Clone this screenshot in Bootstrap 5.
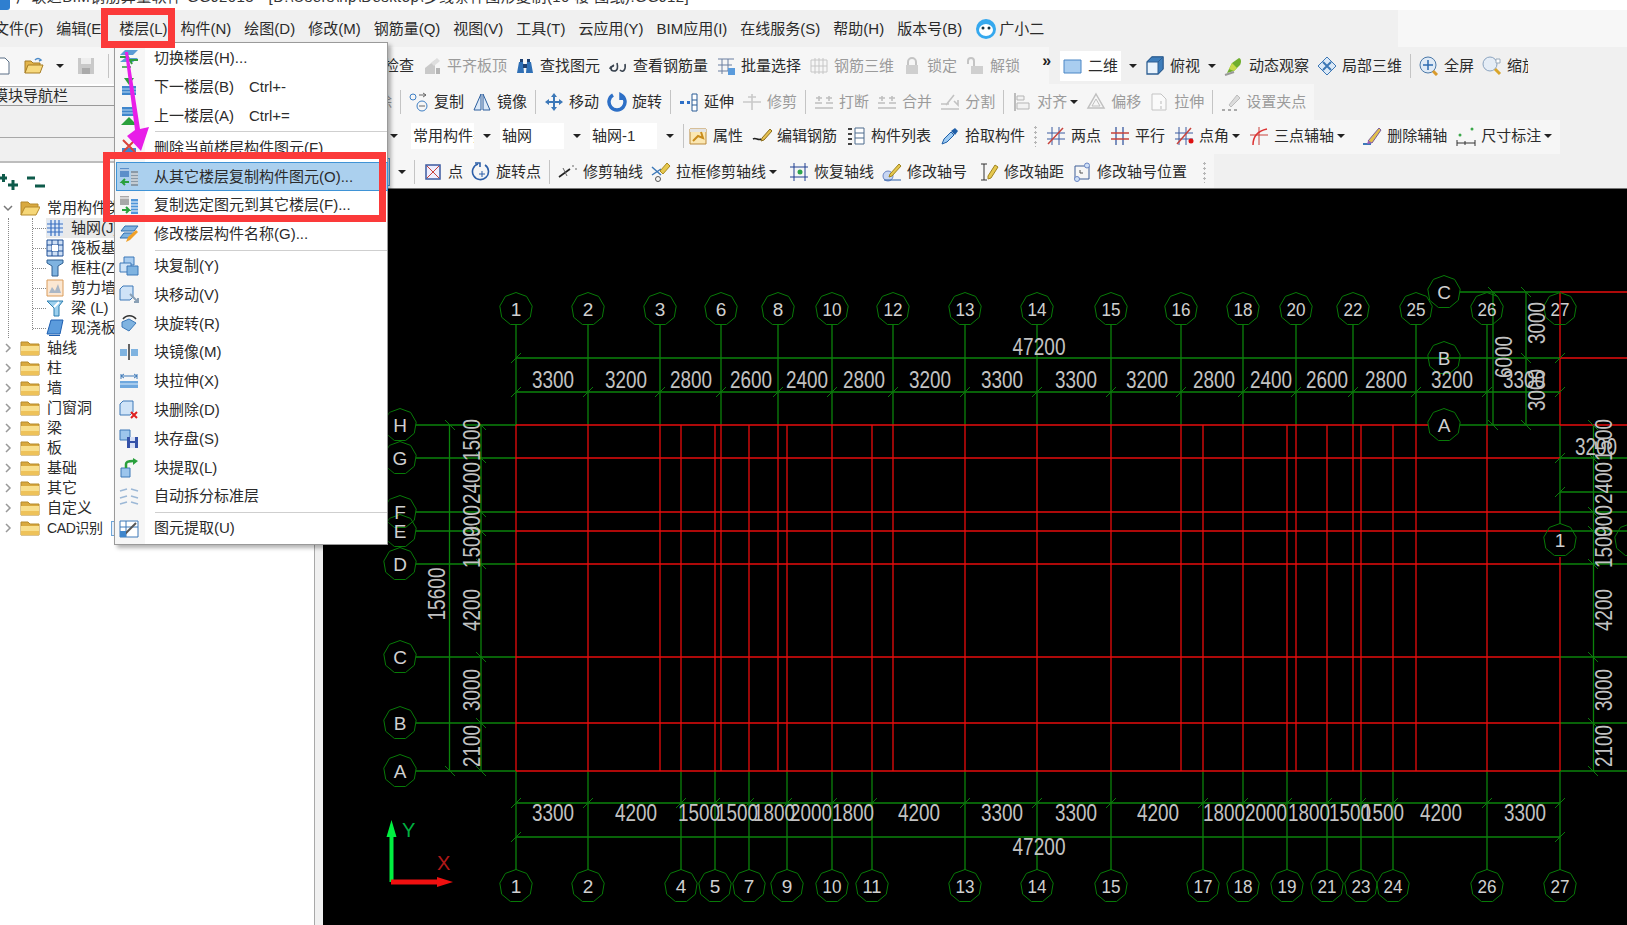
<!DOCTYPE html>
<html lang="zh-CN">
<head>
<meta charset="utf-8">
<title>广联达BIM钢筋算量软件 GGJ2013</title>
<link href="https://cdn.jsdelivr.net/npm/bootstrap@5.3.0/dist/css/bootstrap.min.css" rel="stylesheet">
<style>
html,body{height:100%;overflow:hidden}
body{font-family:"Liberation Sans","Noto Sans CJK SC",sans-serif;font-size:15px;color:#2b2b2b;background:#f0f0f0;line-height:20px}
.shell{width:1627px;height:925px;overflow:hidden}
.title-strip{height:10px;background:#fff;overflow:hidden;white-space:nowrap;padding-left:16px}
.title-strip span{margin-bottom:3px;color:#333;letter-spacing:.4px}
.title-ico{width:10px;height:10px;background:#2f7fd0;margin-left:-16px;margin-right:6px;border-radius:0 0 3px 0;flex:none}
.menu-strip{height:37px;background:linear-gradient(90deg,#f0f0f0 1398px,#f7f7f7 1398px);white-space:nowrap;padding-left:0}
.menu-strip>span{margin-left:13px}
.menu-strip>span:first-child{margin-left:-6px}
.menu-strip svg{width:22px;height:22px;margin-right:2px}
.tb{white-space:nowrap;gap:8px;overflow:hidden;background:#f0f0f0}
.tb-one{height:37px}
.tb-two{height:36px}
.tb-three,.tb-four{height:34px}
.tb-three{gap:9px}
.tb-three .tb-lit{padding-bottom:2px}
.tb-four .tb-lit{padding-top:2px}
.tb-lit{background:#f6f6f6;gap:inherit;height:100%}
.lit-end{padding-right:8px}
.tool{gap:5px;flex:none}
.tool svg{width:20px;height:20px;flex:none}
.tool .car{margin-left:-2px}
.pull-in{margin-left:-5px}
.off{color:#9b9b9b}
.vs{width:1px;height:24px;background:#c4c4c4;flex:none}
.car{width:0;height:0;border:4px solid transparent;border-top:4px solid #222;border-bottom:0;flex:none}
.grip{width:3px;height:22px;flex:none;background:radial-gradient(circle,#b5b5b5 1.2px,transparent 1.4px) 0 0/3px 5px}
.lead-one{width:384px;margin-left:-8px;gap:12px;flex:none}
.lead-one svg{width:20px;height:20px}
.lead-two{width:69px;flex:none;justify-content:flex-end;overflow:hidden}
.lead-three{width:75px;flex:none;justify-content:flex-end;gap:0}
.lead-four{width:67px;flex:none;justify-content:flex-end}
.blue-stub{width:10px;height:28px;border:1px solid #4ea3dc;border-left:0;background:#dbeafa;flex:none}
.combo-box{background:#fff;overflow:hidden;height:26px;line-height:26px;padding-left:2px;flex:none}
.w-a{width:63px}.w-b{width:64px}.w-c{width:67px}
.twod{background:#fff;height:30px;padding:0 3px;margin-left:3px}
.chev2{font-size:16px;font-weight:700;line-height:14px;margin:-10px -2px 0 14px;color:#222}
.clip-txt{width:21px;overflow:hidden;flex:none}
.side{width:315px;flex:none;background:#fff;border-right:1px solid #a8a8a8}
.side-head{height:20px;margin-top:2px;background:#f0f0f0;border-top:1px solid #aaa;border-bottom:1px solid #999;text-indent:-7px;line-height:18px;overflow:hidden;white-space:nowrap}
.side-band{height:32px;background:#f0f0f0;border-bottom:1px solid #a8a8a8}
.side-band.lo{height:25px;border-bottom:2px solid #bdbdbd}
.side-tools{height:35px;background:#fff;padding:11px 0 0 0;gap:8px}
.side-tools svg{width:19px;height:17px}
.twig{height:20px;padding-left:3px;white-space:nowrap;overflow:hidden}
.twig .arr{width:10px;height:12px;margin-right:7px;flex:none}
.twig .fld{width:20px;height:18px;margin-right:7px;flex:none}
.cadtag{font-size:14px;letter-spacing:-.4px}
.kidbox{margin-left:8px;border-left:1px dotted #888;height:120px}
.kidin{margin-left:23px;border-left:1px dotted #888;height:112px}
.kid{height:20px;white-space:nowrap;overflow:hidden}
.kid .dot{width:13px;border-top:1px dotted #888;flex:none}
.kid svg{width:18px;height:18px;margin:0 7px 0 0;flex:none}
.kid.on{background:linear-gradient(90deg,transparent 13px,#e9e9e9 13px)}
.mini{width:10px;height:15px;border:1px solid #6fa5d8;background:#e8f1fb;margin-left:8px;flex:none}
.gutter{width:8px;flex:none;background:#f0f0f0}
.work{width:1304px;flex:none;min-width:0}
.sheet{height:737px;background:#000;overflow:hidden;border-top:1px solid #777}
.sheet svg{display:block}
.g{stroke:#0b820b;stroke-width:1.3;fill:none}
.r{stroke:#e80c0c;stroke-width:1.3;fill:none}
.tk{stroke:#0a7a0a;stroke-width:1;fill:none}
.bb{stroke:#087a08;stroke-width:1;fill:none}
.num text{font-size:19px;fill:#d0d0d0;text-anchor:middle;font-family:"Liberation Sans",sans-serif}
.dm text{font-size:24px;fill:#c2c2c2;text-anchor:middle;font-family:"Liberation Sans",sans-serif}
.ax-y{font-size:20px;fill:#00b040;font-family:"Liberation Sans",sans-serif;font-weight:400}
.ax-x{font-size:20px;fill:#b01818;font-family:"Liberation Sans",sans-serif}
.dropdown-menu.floormenu{position:absolute;left:114px;top:42px;width:274px;height:503px;padding:1px 0;margin:0;min-width:0;border:1px solid #9a9a9a;border-radius:0;background:linear-gradient(90deg,#f6f6f6 30px,#fff 30px);box-shadow:3px 3px 4px rgba(0,0,0,.3);font-size:15px;z-index:5}
.floormenu .dropdown-item{height:28.8px;padding:0 0 0 4px;color:#2b2b2b;font-size:15px;line-height:28px;white-space:nowrap;gap:15px}
.floormenu .dropdown-item svg{width:20px;height:20px;flex:none}
.floormenu .dropdown-item.picked{background:#abd0ee;outline:1px solid #3f93d6;outline-offset:-1px;margin-left:1px;padding-left:3px}
.floormenu .dropdown-divider{margin:1px 0 1px 40px;border-top:1px solid #cfcfcf}
.redbox{position:absolute;border:7px solid #fb3a3a;z-index:6}
.rb-a{left:101px;top:8px;width:74px;height:40px}
.rb-b{left:103px;top:152px;width:283px;height:70px}
.anno{position:absolute;left:0;top:0;z-index:7;pointer-events:none}
</style>
</head>
<body>
<svg class="d-none" xmlns="http://www.w3.org/2000/svg">
<!-- toolbar icons -->
<symbol id="doc" viewBox="0 0 20 20"><path d="M3 2h10l4 4v12H3z" fill="#fff" stroke="#5a6f86"/></symbol>
<symbol id="open" viewBox="0 0 20 20"><path d="M1 17V5h6l2 2h7v3" fill="#e3b54c" stroke="#a67c24"/><path d="M1 17l3-8h15l-3 8z" fill="#f7d97e" stroke="#a67c24"/><path d="M11 4c2-2 4-2 6 0l-2 1" fill="none" stroke="#4b8ac8" stroke-width="1.5"/></symbol>
<symbol id="save" viewBox="0 0 20 20"><path d="M2 2h16v16H2z" fill="#c9c9c9"/><path d="M5 2h10v6H5z" fill="#eee"/><path d="M6 12h8v6H6z" fill="#aaa"/></symbol>
<symbol id="level" viewBox="0 0 20 20"><path d="M3 18v-6l10-8v14z" fill="#c9c9c9"/><path d="M9 7l6-5 3 3-6 5z" fill="#dedede"/><path d="M14 12h4v6h-4z" fill="#b5b5b5"/></symbol>
<symbol id="bino" viewBox="0 0 20 20"><path d="M2 17l2-11h4l1 11zM18 17l-2-11h-4l-1 11z" fill="#2f6fb5"/><path d="M5 3h3v3H5zM12 3h3v3h-3zM8 8h4v4H8z" fill="#1d3f70"/></symbol>
<symbol id="hook" viewBox="0 0 20 20"><path d="M2 13c0-3 2-3 4-3M6 9c-4 2-4 6 0 6s4-4 3-8M12 14c3 3 6 0 5-6" fill="none" stroke="#3a4450" stroke-width="1.6"/></symbol>
<symbol id="batch" viewBox="0 0 20 20"><path d="M2 3h16M2 9h14M2 15h10M6 3v15M12 3v12" stroke="#6b7fa0" fill="none"/><path d="M12 12h7v7h-7z" fill="#5a9bdc"/></symbol>
<symbol id="grid3" viewBox="0 0 20 20"><path d="M2 4h16v12H2zM6 2v16M10 2v16M14 2v16M2 10h16" fill="none" stroke="#c6c6c6"/></symbol>
<symbol id="lock" viewBox="0 0 20 20"><path d="M4 9h12v9H4z" fill="#cfcfcf"/><path d="M6 9V6a4 4 0 0 1 8 0v3" fill="none" stroke="#c4c4c4" stroke-width="2"/></symbol>
<symbol id="unlock" viewBox="0 0 20 20"><path d="M6 10h12v8H6z" fill="#cfcfcf"/><path d="M3 8V5a3 3 0 0 1 6 0v5" fill="none" stroke="#c4c4c4" stroke-width="2"/></symbol>
<symbol id="sq" viewBox="0 0 20 20"><path d="M1 4h17v13H1z" fill="#a9cdf0" stroke="#4a86c5"/></symbol>
<symbol id="cube" viewBox="0 0 20 20"><path d="M2 6l5-5h11v12l-5 5H2z" fill="#e9f3fc" stroke="#2e5f92" stroke-width="1.3"/><path d="M2 6h11l5-5H7zM13 6h0v12l5-5V1z" fill="#3d7dbb" stroke="#2e5f92"/></symbol>
<symbol id="orbit" viewBox="0 0 20 20"><path d="M3 17L8 7l7-5c3 1 2 5 1 7l-6 6z" fill="#6fae2e"/><path d="M8 7l5 5-3 3-5-2z" fill="#c6d94a"/><path d="M1 19l9-3" stroke="#999" stroke-width="2"/></symbol>
<symbol id="local" viewBox="0 0 20 20"><path d="M10 1l9 9-9 9-9-9z" fill="#dbe9f7" stroke="#3c77b5"/><path d="M6 6l8 8M14 6l-8 8" stroke="#3c77b5" stroke-width="2"/></symbol>
<symbol id="zall" viewBox="0 0 20 20"><circle cx="9" cy="9" r="8" fill="#dfeaf6" stroke="#4a78a8"/><path d="M9 4v10M4 9h10" stroke="#2e6bb0" stroke-width="1.5"/><path d="M14 15l4 4" stroke="#d99a2b" stroke-width="3"/></symbol>
<symbol id="zwin" viewBox="0 0 20 20"><circle cx="8" cy="8" r="7" fill="#e5edf6" stroke="#8aa3bf"/><path d="M13 13l5 5" stroke="#d9a52b" stroke-width="3"/><path d="M14 3h4v4h-4z" fill="#fff" stroke="#9ab"/></symbol>
<symbol id="cp" viewBox="0 0 20 20"><circle cx="4" cy="5" r="3" fill="none" stroke="#3f7fc4"/><circle cx="13" cy="14" r="5" fill="none" stroke="#3f7fc4"/><path d="M10 3l7 0M14 1l3 2-3 2M10 14l6 0" stroke="#666" fill="none"/></symbol>
<symbol id="mir" viewBox="0 0 20 20"><path d="M9 2L2 18h7zM11 2l7 16h-7z" fill="#dce9f7" stroke="#2c5f9e"/></symbol>
<symbol id="mv" viewBox="0 0 20 20"><path d="M10 1l3 4h-2v4h4V7l4 3-4 3v-2h-4v4h2l-3 4-3-4h2v-4H5v2l-4-3 4-3v2h4V5H7z" fill="#3c78b8"/></symbol>
<symbol id="rot" viewBox="0 0 20 20"><path d="M6 3a8 8 0 1 0 8 0v5" fill="none" stroke="#2d6fc6" stroke-width="3.5"/></symbol>
<symbol id="ext" viewBox="0 0 20 20"><path d="M1 9h4v3H1zM8 9h3v3H8z" fill="#2d6fc6"/><path d="M13 2h5v17h-5zM13 8h5M13 13h5" fill="#fff" stroke="#2a5d96"/></symbol>
<symbol id="trm" viewBox="0 0 20 20"><path d="M1 10h18M10 2v16M6 5h8" stroke="#c9c9c9" stroke-width="1.6" fill="none"/></symbol>
<symbol id="brk" viewBox="0 0 20 20"><path d="M1 11h7M12 11h7M1 16h18M5 4v5M15 4v5M2 6h6M12 6h6" stroke="#bfbfbf" stroke-width="1.6" fill="none"/></symbol>
<symbol id="spl" viewBox="0 0 20 20"><path d="M1 17h18M1 12h8M14 3L6 13M14 9l4 4v-5" stroke="#c2c2c2" stroke-width="1.6" fill="none"/></symbol>
<symbol id="alg" viewBox="0 0 20 20"><path d="M3 1v18" stroke="#a8a8a8" stroke-width="1.5"/><path d="M5 4h7v4H5zM5 11h12v6H5z" fill="#f2f2f2" stroke="#b5b5b5"/></symbol>
<symbol id="ofs" viewBox="0 0 20 20"><path d="M10 2l8 14H2z" fill="none" stroke="#c0c0c0" stroke-width="1.5"/><path d="M10 7l4 7H6z" fill="none" stroke="#c0c0c0"/></symbol>
<symbol id="str" viewBox="0 0 20 20"><path d="M3 2h9l5 5v11H3z" fill="#fafafa" stroke="#c4c4c4"/><path d="M12 9v3M12 14v3" stroke="#bbb"/></symbol>
<symbol id="gripi" viewBox="0 0 20 20"><path d="M8 13L16 3l3 3-9 9z" fill="#dcdcdc" stroke="#bcbcbc"/><path d="M1 18h3M7 18h3M13 18h3" stroke="#aaa" stroke-width="2"/></symbol>
<symbol id="prop" viewBox="0 0 20 20"><path d="M2 3h16v15H2z" fill="#fbe7b2" stroke="#b9893a"/><path d="M2 3h16v3H2z" fill="#e3e3e3"/><path d="M5 15l5-5 5 2-2-6" stroke="#c98c1c" stroke-width="2" fill="none"/></symbol>
<symbol id="edr" viewBox="0 0 20 20"><path d="M1 13c3-2 5 2 8 0" stroke="#222" stroke-width="1.6" fill="none"/><path d="M10 12L18 3l2 2-8 9-3 1z" fill="#e6c04f" stroke="#8a6d1d"/></symbol>
<symbol id="lst" viewBox="0 0 20 20"><path d="M9 2h9v16H9zM9 7h9M9 12h9" fill="#fff" stroke="#4c6a8c"/><path d="M2 3h4M2 8h4M2 13h4M2 18h4" stroke="#444" stroke-width="2"/></symbol>
<symbol id="pick" viewBox="0 0 20 20"><path d="M2 18l2-5 7-7 3 3-7 7z" fill="#9ccaf2" stroke="#1f5fa8"/><path d="M11 5l4-3 3 3-3 4z" fill="#1f5fa8"/></symbol>
<symbol id="twop" viewBox="0 0 20 20"><path d="M6 1v18M13 1v18M1 7h18M1 13h18" stroke="#3a5aa0" fill="none"/><path d="M2 18L17 2" stroke="#c8433c" stroke-width="1.5"/></symbol>
<symbol id="para" viewBox="0 0 20 20"><path d="M6 1v18M13 1v18" stroke="#3a5aa0" stroke-width="1.3" fill="none"/><path d="M1 7h18M1 13h18" stroke="#c8433c" stroke-width="1.3"/></symbol>
<symbol id="pang" viewBox="0 0 20 20"><path d="M5 1v18M12 1v18M1 7h18M1 13h18" stroke="#3a5aa0" fill="none"/><path d="M3 18L17 2" stroke="#c8433c" stroke-width="1.5"/><circle cx="17" cy="15" r="2.5" fill="#d11"/></symbol>
<symbol id="thrp" viewBox="0 0 20 20"><path d="M10 1v18M1 9h18" stroke="#c8433c" fill="none"/><path d="M4 19c0-8 4-14 14-16" stroke="#d33" stroke-width="1.5" fill="none"/></symbol>
<symbol id="dela" viewBox="0 0 20 20"><path d="M1 18h8" stroke="#3c78b8" stroke-width="2"/><path d="M6 15L17 2l2 2-9 13z" fill="#e2c04b" stroke="#7a5c9a"/><path d="M6 15l4 2-5 1z" fill="#a55fb5"/></symbol>
<symbol id="dimn" viewBox="0 0 20 20"><path d="M1 17h18M1 14v6M19 14v6M9 15v4" stroke="#333" fill="none"/><circle cx="4" cy="9" r="1.5" fill="#3ba84a"/><circle cx="16" cy="3" r="1.5" fill="#3ba84a"/></symbol>
<symbol id="ptx" viewBox="0 0 20 20"><path d="M3 3h14v14H3z" fill="#eef" stroke="#3d5aa0" stroke-width="1.5"/><path d="M4 4l12 12M16 4L4 16" stroke="#c8433c"/></symbol>
<symbol id="rotp" viewBox="0 0 20 20"><path d="M7 2a8 8 0 1 0 7 1" fill="none" stroke="#2d5fa8" stroke-width="1.6"/><path d="M4 1h5v4" fill="none" stroke="#2d5fa8" stroke-width="1.6"/><path d="M11 9v6M8 12h6" stroke="#2d5fa8"/></symbol>
<symbol id="trma" viewBox="0 0 20 20"><path d="M1 15L12 7" stroke="#222" stroke-width="1.6"/><path d="M5 6l4 8M14 4l2 0M17 7l2 0" stroke="#666"/></symbol>
<symbol id="boxt" viewBox="0 0 20 20"><path d="M1 5l9 8M1 13l9-6" stroke="#3c78b8" stroke-width="1.5"/><path d="M9 9l7-8 3 3-7 8z" fill="#e6c84f" stroke="#aa8a20"/><circle cx="7" cy="17" r="2.5" fill="none" stroke="#555"/></symbol>
<symbol id="rest" viewBox="0 0 20 20"><path d="M5 1v18M16 1v18M1 5h18M1 15h18" stroke="#1f3f90" fill="none"/><circle cx="11" cy="10" r="2.5" fill="#2ca44c"/></symbol>
<symbol id="edno" viewBox="0 0 20 20"><circle cx="6" cy="14" r="5" fill="#c8d6f2" stroke="#6b86c4"/><path d="M8 12L17 2l2 2-9 10-3 1z" fill="#e6c84f" stroke="#a0841f"/><path d="M2 18h17" stroke="#2c5fa8"/></symbol>
<symbol id="eddi" viewBox="0 0 20 20"><path d="M2 2h6M5 2v16M2 18h6" stroke="#333" fill="none"/><path d="M9 14l7-11 3 2-7 11-3 1z" fill="#e6c84f" stroke="#a0841f"/></symbol>
<symbol id="edps" viewBox="0 0 20 20"><path d="M3 4h14v13H3z" fill="none" stroke="#3f5f96"/><circle cx="15" cy="3.500" r="2.500" fill="#cfe0f7" stroke="#6b86c4"/><circle cx="5" cy="17" r="2.500" fill="#cfe0f7" stroke="#6b86c4"/><path d="M8 8v3h3" stroke="#555" fill="none"/></symbol>
<!-- menu icons -->
<symbol id="m1" viewBox="0 0 20 20"><path d="M1 7l5-5h13l-5 5z" fill="#5b9bd5"/><path d="M1 14l5-4h13l-5 4z" fill="#5b9bd5"/><path d="M1 9h8l-2-3M19 12h-8l2 4" stroke="#2c9c3c" stroke-width="2" fill="none"/><path d="M3 19h9" stroke="#2c9c3c" stroke-width="1.500"/></symbol>
<symbol id="m2" viewBox="0 0 20 20"><path d="M3 9h14v9H3z" fill="#3f86cc"/><path d="M3 12h14M3 15h14" stroke="#bcd8f2"/><path d="M5 1h10l-5 7z" fill="#2aa03c"/></symbol>
<symbol id="m3" viewBox="0 0 20 20"><path d="M3 1h14v9H3z" fill="#3f86cc"/><path d="M3 4h14M3 7h14" stroke="#bcd8f2"/><path d="M10 11l8 8H2z" fill="#2aa03c"/></symbol>
<symbol id="m4" viewBox="0 0 20 20"><path d="M3 10h14v9H3z" fill="#3f86cc"/><path d="M4 2l12 12M16 2L4 14" stroke="#d9433b" stroke-width="2"/></symbol>
<symbol id="m5" viewBox="0 0 20 20"><path d="M1 1h9v9H1z" fill="#5b8fc9"/><path d="M1 3h9" stroke="#fff"/><path d="M12 4h7v15h-7z" fill="#8a9aa8"/><path d="M12 7h7M12 10h7M12 13h7M12 16h7" stroke="#fff"/><path d="M10 15H3l3-3M3 15l3 3" stroke="#2aa03c" stroke-width="2" fill="none"/></symbol>
<symbol id="m6" viewBox="0 0 20 20"><path d="M1 1h9v9H1z" fill="#a8a8a8"/><path d="M1 3h9" stroke="#fff"/><path d="M12 4h7v15h-7z" fill="#4f95d8"/><path d="M12 7h7M12 10h7M12 13h7M12 16h7" stroke="#fff"/><path d="M3 15h7l-3-3M10 15l-3 3" stroke="#2aa03c" stroke-width="2" fill="none"/></symbol>
<symbol id="m7" viewBox="0 0 20 20"><path d="M2 7l4-5h13l-4 5zM1 14l4-5h10l-4 5z" fill="#7fb3e0" stroke="#2e6fb0"/><path d="M7 18l2-5 8-7 2 2-8 8z" fill="#f0a028"/></symbol>
<symbol id="m8" viewBox="0 0 20 20"><path d="M5 1h10v8H5z" fill="#a9cdf0" stroke="#3c78b8"/><path d="M1 7h11v9H1z" fill="#cfe3f7" stroke="#3c78b8"/><path d="M8 10h11v9H8z" fill="#7fb3e0" stroke="#3c78b8"/></symbol>
<symbol id="m9" viewBox="0 0 20 20"><path d="M1 4l3-3h10v11l-3 3H1z" fill="#cfe3f7" stroke="#3c78b8"/><path d="M11 9l8 8M19 13v4h-4" stroke="#8aa0b5" stroke-width="2" fill="none"/></symbol>
<symbol id="m10" viewBox="0 0 20 20"><path d="M3 8l7-3 7 4-7 8-7-4z" fill="#7fb3e0" stroke="#3c78b8"/><path d="M4 5a8 8 0 0 1 13 0" stroke="#333" stroke-width="1.500" fill="none"/></symbol>
<symbol id="m11" viewBox="0 0 20 20"><path d="M10 2v16" stroke="#333" stroke-width="1.500"/><path d="M1 7h7v7H1zM12 7h7v7h-7z" fill="#7fb3e0"/></symbol>
<symbol id="m12" viewBox="0 0 20 20"><path d="M2 3v5M18 3v5M2 5h16M5 3L2 5l3 2M15 3l3 2-3 2" stroke="#3c78b8" fill="none"/><path d="M1 10h18v7H1z" fill="#6fa8de"/><path d="M1 13h18" stroke="#dcecfb"/></symbol>
<symbol id="m13" viewBox="0 0 20 20"><path d="M1 4l3-3h10v11l-3 3H1z" fill="#cfe3f7" stroke="#3c78b8"/><path d="M12 12l6 6M18 12l-6 6" stroke="#e02020" stroke-width="2"/></symbol>
<symbol id="m14" viewBox="0 0 20 20"><path d="M1 1h10v10H1z" fill="#9cc5ec" stroke="#3c78b8"/><path d="M8 8h11v11H8z" fill="#3552a8"/><path d="M11 8h5v4h-5zM11 14h5v5h-5z" fill="#d7e0f5"/></symbol>
<symbol id="m15" viewBox="0 0 20 20"><path d="M2 10h9v9H2z" fill="#9cc5ec" stroke="#3c78b8"/><path d="M7 10V6c0-3 4-3 7-3" stroke="#2aa03c" stroke-width="2.500" fill="none"/><path d="M14 0l5 3-5 4z" fill="#2aa03c"/></symbol>
<symbol id="m16" viewBox="0 0 20 20"><path d="M1 5l7-2M1 12l7-2M1 18l7-2M12 3l7 2M12 10l7 2M12 16l7 2" stroke="#9cb8d6" stroke-width="1.500"/></symbol>
<symbol id="m17" viewBox="0 0 20 20"><path d="M1 3h18v16H1z" fill="#fff" stroke="#3c78b8"/><path d="M1 9h18M7 3v16" stroke="#3c78b8"/><path d="M6 16L17 5" stroke="#555" stroke-width="2"/><path d="M1 13h6v6H1z" fill="#3f86cc"/></symbol>
<symbol id="xm" viewBox="0 0 22 22"><circle cx="11" cy="11" r="10" fill="#35a8ee"/><ellipse cx="11" cy="12" rx="7" ry="6" fill="#fff"/><circle cx="8" cy="10" r="1.500" fill="#134"/><circle cx="14" cy="10" r="1.500" fill="#134"/></symbol>
<!-- tree icons -->
<symbol id="down" viewBox="0 0 10 12"><path d="M1 4l4 4 4-4" fill="none" stroke="#777" stroke-width="1.500"/></symbol>
<symbol id="right" viewBox="0 0 10 12"><path d="M3 2l4 4-4 4" fill="none" stroke="#999" stroke-width="1.500"/></symbol>
<symbol id="fold" viewBox="0 0 20 18"><path d="M1 16V3h7l2 2h9v11z" fill="#d9a93f" stroke="#b58a2c"/><path d="M1 7h18v9H1z" fill="#f8df8e"/><path d="M1 12h18v4H1z" fill="#eec25a"/></symbol>
<symbol id="fopen" viewBox="0 0 20 18"><path d="M1 16V3h7l2 2h8v4" fill="#d9a93f" stroke="#b58a2c"/><path d="M1 16l4-8h15l-4 8z" fill="#f6d778" stroke="#b58a2c"/></symbol>
<symbol id="t1" viewBox="0 0 18 18"><path d="M1 1h16v16H1z" fill="#dce8f7"/><path d="M1 5h16M1 9h16M1 13h16M5 1v16M9 1v16M13 1v16" stroke="#3a6fc0" stroke-width="1.200"/></symbol>
<symbol id="t2" viewBox="0 0 18 18"><path d="M1 1h16v16H1z" fill="#cfe0f5" stroke="#1f4f96"/><path d="M6 1v16M12 1v16M1 6h16M1 12h16" stroke="#1f4f96"/><path d="M6 6h6v6H6z" fill="#fff"/></symbol>
<symbol id="t3" viewBox="0 0 18 18"><path d="M1 1h16v3l-5 3v10H6V7L1 4z" fill="#7fb3e0" stroke="#2e5f92"/></symbol>
<symbol id="t4" viewBox="0 0 18 18"><path d="M1 1h16v16H1z" fill="#fbe7d2" stroke="#d99b5a"/><path d="M3 14l3-6 3 4 3-7 3 9z" fill="#aab7c6"/></symbol>
<symbol id="t5" viewBox="0 0 18 18"><path d="M1 2h16l-4 5v10H8V9z" fill="#9cd0ee" stroke="#2e7fb0"/><path d="M8 8l5-5" stroke="#fff" stroke-width="2"/></symbol>
<symbol id="t6" viewBox="0 0 18 18"><path d="M5 1h12l-3 14H1z" fill="#5b9bdc" stroke="#1f5fb0"/><path d="M3 16h11v1H3z" fill="#1f5fb0"/></symbol>
</svg>

<div class="shell d-flex flex-column position-relative">
  <div class="title-strip d-flex align-items-end"><i class="title-ico align-self-start"></i><span>广联达BIM钢筋算量软件 GGJ2013 - [D:\Users\hp\Desktop\多线条件图形复制(10 楼 图纸).GGJ12]</span></div>

  <div class="menu-strip d-flex align-items-center">
    <span>文件(F)</span><span>编辑(E)</span><span>楼层(L)</span><span>构件(N)</span><span>绘图(D)</span><span>修改(M)</span><span>钢筋量(Q)</span><span>视图(V)</span><span>工具(T)</span><span>云应用(Y)</span><span>BIM应用(I)</span><span>在线服务(S)</span><span>帮助(H)</span><span>版本号(B)</span>
    <span class="d-inline-flex align-items-center"><svg><use href="#xm"/></svg>广小二</span>
  </div>

  <div class="tb tb-one d-flex align-items-center">
    <div class="tb-lit d-flex align-items-center">
      <div class="lead-one d-flex align-items-center"><svg><use href="#doc"/></svg><svg><use href="#open"/></svg><i class="car"></i><svg><use href="#save"/></svg><i class="vs"></i></div>
      <span class="tool d-inline-flex align-items-center">检查</span>
      <span class="tool off d-inline-flex align-items-center"><svg><use href="#level"/></svg>平齐板顶</span>
      <span class="tool d-inline-flex align-items-center"><svg><use href="#bino"/></svg>查找图元</span>
      <span class="tool d-inline-flex align-items-center"><svg><use href="#hook"/></svg>查看钢筋量</span>
      <span class="tool d-inline-flex align-items-center"><svg><use href="#batch"/></svg>批量选择</span>
      <span class="tool off d-inline-flex align-items-center"><svg><use href="#grid3"/></svg>钢筋三维</span>
      <span class="tool off d-inline-flex align-items-center"><svg><use href="#lock"/></svg>锁定</span>
      <span class="tool off d-inline-flex align-items-center"><svg><use href="#unlock"/></svg>解锁</span>
      <span class="chev2">»</span>
    </div>
    <span class="tool twod d-inline-flex align-items-center"><svg><use href="#sq"/></svg>二维</span><i class="car"></i>
    <span class="tool d-inline-flex align-items-center"><svg><use href="#cube"/></svg>俯视</span><i class="car"></i>
    <span class="tool d-inline-flex align-items-center"><svg><use href="#orbit"/></svg>动态观察</span>
    <span class="tool d-inline-flex align-items-center"><svg><use href="#local"/></svg>局部三维</span>
    <i class="vs"></i>
    <span class="tool d-inline-flex align-items-center"><svg><use href="#zall"/></svg>全屏</span>
    <span class="tool d-inline-flex align-items-center"><svg><use href="#zwin"/></svg><span class="clip-txt">缩放</span></span>
  </div>

  <div class="d-flex flex-fill">
    <aside class="side d-flex flex-column">
      <div class="side-head">模块导航栏</div>
      <div class="side-band"></div>
      <div class="side-band lo"></div>
      <div class="side-tools d-flex align-items-start">
        <svg viewBox="0 0 19 17"><path d="M0 4h7M3.500 0v8M8 11h10M13 6v10" stroke="#0e5a4a" stroke-width="3"/></svg>
        <svg viewBox="0 0 19 17"><path d="M0 4h8M8 12h10" stroke="#0e5a4a" stroke-width="3"/></svg>
      </div>
      <ul class="list-unstyled m-0">
        <li class="twig d-flex align-items-center"><svg class="arr"><use href="#down"/></svg><svg class="fld"><use href="#fopen"/></svg>常用构件类型</li>
        <li class="kidbox"><div class="kidin">
          <div class="kid on d-flex align-items-center"><i class="dot"></i><svg><use href="#t1"/></svg><span>轴网(J)</span></div>
          <div class="kid d-flex align-items-center"><i class="dot"></i><svg><use href="#t2"/></svg><span>筏板基础(M)</span></div>
          <div class="kid d-flex align-items-center"><i class="dot"></i><svg><use href="#t3"/></svg><span>框柱(Z)</span></div>
          <div class="kid d-flex align-items-center"><i class="dot"></i><svg><use href="#t4"/></svg><span>剪力墙(Q)</span></div>
          <div class="kid d-flex align-items-center"><i class="dot"></i><svg><use href="#t5"/></svg><span>梁 (L)</span></div>
          <div class="kid d-flex align-items-center"><i class="dot"></i><svg><use href="#t6"/></svg><span>现浇板(B)</span></div>
        </div></li>
        <li class="twig d-flex align-items-center"><svg class="arr"><use href="#right"/></svg><svg class="fld"><use href="#fold"/></svg>轴线</li>
        <li class="twig d-flex align-items-center"><svg class="arr"><use href="#right"/></svg><svg class="fld"><use href="#fold"/></svg>柱</li>
        <li class="twig d-flex align-items-center"><svg class="arr"><use href="#right"/></svg><svg class="fld"><use href="#fold"/></svg>墙</li>
        <li class="twig d-flex align-items-center"><svg class="arr"><use href="#right"/></svg><svg class="fld"><use href="#fold"/></svg>门窗洞</li>
        <li class="twig d-flex align-items-center"><svg class="arr"><use href="#right"/></svg><svg class="fld"><use href="#fold"/></svg>梁</li>
        <li class="twig d-flex align-items-center"><svg class="arr"><use href="#right"/></svg><svg class="fld"><use href="#fold"/></svg>板</li>
        <li class="twig d-flex align-items-center"><svg class="arr"><use href="#right"/></svg><svg class="fld"><use href="#fold"/></svg>基础</li>
        <li class="twig d-flex align-items-center"><svg class="arr"><use href="#right"/></svg><svg class="fld"><use href="#fold"/></svg>其它</li>
        <li class="twig d-flex align-items-center"><svg class="arr"><use href="#right"/></svg><svg class="fld"><use href="#fold"/></svg>自定义</li>
        <li class="twig d-flex align-items-center"><svg class="arr"><use href="#right"/></svg><svg class="fld"><use href="#fold"/></svg><span class="cadtag">CAD识别</span><i class="mini"></i></li>
      </ul>
    </aside>
    <div class="gutter"></div>
    <div class="work d-flex flex-column">
      <div class="tb tb-two d-flex align-items-center">
        <div class="tb-lit d-flex align-items-center lit-end">
          <div class="lead-two d-flex align-items-center"><span class="off">删除</span></div>
          <i class="vs"></i>
          <span class="tool d-inline-flex align-items-center"><svg><use href="#cp"/></svg>复制</span>
          <span class="tool d-inline-flex align-items-center"><svg><use href="#mir"/></svg>镜像</span>
          <i class="vs"></i>
          <span class="tool d-inline-flex align-items-center"><svg><use href="#mv"/></svg>移动</span>
          <span class="tool d-inline-flex align-items-center"><svg><use href="#rot"/></svg>旋转</span>
          <i class="vs"></i>
          <span class="tool d-inline-flex align-items-center"><svg><use href="#ext"/></svg>延伸</span>
          <span class="tool off d-inline-flex align-items-center"><svg><use href="#trm"/></svg>修剪</span>
          <i class="vs"></i>
          <span class="tool off d-inline-flex align-items-center"><svg><use href="#brk"/></svg>打断</span>
          <span class="tool off d-inline-flex align-items-center"><svg><use href="#brk"/></svg>合并</span>
          <span class="tool off d-inline-flex align-items-center"><svg><use href="#spl"/></svg>分割</span>
          <i class="vs"></i>
          <span class="tool off d-inline-flex align-items-center"><svg><use href="#alg"/></svg>对齐<i class="car"></i></span>
          <span class="tool off d-inline-flex align-items-center"><svg><use href="#ofs"/></svg>偏移</span>
          <span class="tool off d-inline-flex align-items-center"><svg><use href="#str"/></svg>拉伸</span>
          <i class="vs"></i>
          <span class="tool off d-inline-flex align-items-center"><svg><use href="#gripi"/></svg>设置夹点</span>
        </div>
      </div>
      <div class="tb tb-three d-flex align-items-center">
        <div class="tb-lit d-flex align-items-center lit-end">
          <div class="lead-three d-flex align-items-center"><i class="car"></i></div>
          <div class="combo-box w-a ms-1">常用构件类型</div><i class="car"></i>
          <div class="combo-box w-b">轴网</div><i class="car"></i>
          <div class="combo-box w-c">轴网-1</div><i class="car"></i>
          <i class="vs"></i>
          <span class="tool pull-in d-inline-flex align-items-center"><svg><use href="#prop"/></svg>属性</span>
          <span class="tool d-inline-flex align-items-center"><svg><use href="#edr"/></svg>编辑钢筋</span>
          <span class="tool d-inline-flex align-items-center"><svg><use href="#lst"/></svg>构件列表</span>
          <span class="tool d-inline-flex align-items-center"><svg><use href="#pick"/></svg>拾取构件</span>
          <i class="grip"></i>
          <span class="tool d-inline-flex align-items-center"><svg><use href="#twop"/></svg>两点</span>
          <span class="tool d-inline-flex align-items-center"><svg><use href="#para"/></svg>平行</span>
          <span class="tool d-inline-flex align-items-center"><svg><use href="#pang"/></svg>点角<i class="car"></i></span>
          <span class="tool d-inline-flex align-items-center"><svg><use href="#thrp"/></svg>三点辅轴<i class="car"></i></span>
          <span class="tool d-inline-flex align-items-center ms-2"><svg><use href="#dela"/></svg>删除辅轴</span>
          <span class="tool d-inline-flex align-items-center"><svg><use href="#dimn"/></svg>尺寸标注<i class="car"></i></span>
        </div>
      </div>
      <div class="tb tb-four d-flex align-items-center">
        <div class="tb-lit d-flex align-items-center lit-end">
          <div class="lead-four d-flex align-items-center"><i class="blue-stub"></i></div>
          <i class="car"></i><i class="vs"></i>
          <span class="tool d-inline-flex align-items-center"><svg><use href="#ptx"/></svg>点</span>
          <span class="tool d-inline-flex align-items-center"><svg><use href="#rotp"/></svg>旋转点</span>
          <i class="vs"></i>
          <span class="tool d-inline-flex align-items-center"><svg><use href="#trma"/></svg>修剪轴线</span>
          <span class="tool d-inline-flex align-items-center"><svg><use href="#boxt"/></svg>拉框修剪轴线<i class="car"></i></span>
          <span class="tool d-inline-flex align-items-center ms-1"><svg><use href="#rest"/></svg>恢复轴线</span>
          <span class="tool d-inline-flex align-items-center"><svg><use href="#edno"/></svg>修改轴号</span>
          <span class="tool d-inline-flex align-items-center ms-1"><svg><use href="#eddi"/></svg>修改轴距</span>
          <span class="tool d-inline-flex align-items-center"><svg><use href="#edps"/></svg>修改轴号位置</span>
          <i class="grip ms-2"></i>
        </div>
      </div>
      <div class="sheet">
        <svg width="1304" height="736" viewBox="323 189 1304 736" xmlns="http://www.w3.org/2000/svg">
          <defs><polygon id="bb" class="bb" points="0,-16.500 10.600,-12.600 16.200,-2.900 14.300,8.250 5.600,15.500 -5.600,15.500 -14.300,8.250 -16.200,-2.900 -10.600,-12.600"/></defs>
          <!-- green axes and dimension lines -->
          <path class="g" d="M516 325V425M588 325V425M660 325V425M721 325V425M778 325V425M832 325V425M893 325V425M965 325V425M1037 325V425M1111 325V425M1181 325V425M1243 325V425M1296 325V425M1353 325V425M1416 325V425M1487 325V425
          M516 771V870M588 771V870M681 771V870M715 771V870M749 771V870M787 771V870M832 771V870M872 771V870M965 771V870M1037 771V870M1111 771V870M1203 771V870M1243 771V870M1287 771V870M1327 771V870M1361 771V870M1393 771V870M1487 771V870M1560 771V870
          M516 358H1560M516 392H1560M516 803H1560M516 837H1560
          M416 425H516M416 458H516M416 512H516M416 531H516M416 564H516M416 657H516M416 723H516M416 771H516
          M449.500 425V771M481 425V771M1593.500 425V771
          M1560 458H1627M1560 492H1627M1560 512H1627M1560 531H1627M1560 564H1627M1560 657H1627M1560 723H1627M1560 771H1627
          M1460 292H1560M1460 425H1560M1493 292V425M1526 292V425M1560 425V524"/>
          <!-- red walls -->
          <path class="r" d="M516 425H1428M516 458H1560M516 512H1560M516 531H1560M516 564H1560M516 657H1560M516 723H1560M516 771H1560M1560 292H1627M1560 358H1627M1560 425H1627
          M516 425V771M588 425V771M660 425V771M681 425V771M715 425V771M721 425V771M749 425V771M778 425V771M787 425V771M832 425V771M872 425V771M893 425V771M965 425V771M1037 425V771M1111 425V771M1181 425V771M1203 425V771M1243 425V771M1287 425V771M1296 425V771M1327 425V771M1353 425V771M1361 425V771M1393 425V771M1416 425V771M1487 425V771M1560 292V425M1560 557V771"/>
          <!-- dimension ticks -->
          <path class="tk" d="M511 397l10-10M583 397l10-10M655 397l10-10M716 397l10-10M773 397l10-10M827 397l10-10M888 397l10-10M960 397l10-10M1032 397l10-10M1106 397l10-10M1176 397l10-10M1238 397l10-10M1291 397l10-10M1348 397l10-10M1411 397l10-10M1482 397l10-10M1555 397l10-10M511 363l10-10M1555 363l10-10
          M511 808l10-10M583 808l10-10M676 808l10-10M710 808l10-10M744 808l10-10M782 808l10-10M827 808l10-10M867 808l10-10M960 808l10-10M1032 808l10-10M1106 808l10-10M1198 808l10-10M1238 808l10-10M1282 808l10-10M1322 808l10-10M1356 808l10-10M1388 808l10-10M1482 808l10-10M1555 808l10-10M511 842l10-10M1555 842l10-10
          M445 420l10 10M445 766l10 10M476 420l10 10M476 453l10 10M476 507l10 10M476 526l10 10M476 559l10 10M476 652l10 10M476 718l10 10M476 766l10 10
          M1588 420l10 10M1588 453l10 10M1588 507l10 10M1588 526l10 10M1588 559l10 10M1588 652l10 10M1588 718l10 10M1588 766l10 10
          M1488 287l10 10M1488 420l10 10M1521 287l10 10M1521 353l10 10M1521 420l10 10M1555 463l10-10M1555 497l10-10"/>
          <!-- axis bubbles -->
          <g>
            <use href="#bb" x="516" y="309"/><use href="#bb" x="588" y="309"/><use href="#bb" x="660" y="309"/><use href="#bb" x="721" y="309"/><use href="#bb" x="778" y="309"/><use href="#bb" x="832" y="309"/><use href="#bb" x="893" y="309"/><use href="#bb" x="965" y="309"/><use href="#bb" x="1037" y="309"/><use href="#bb" x="1111" y="309"/><use href="#bb" x="1181" y="309"/><use href="#bb" x="1243" y="309"/><use href="#bb" x="1296" y="309"/><use href="#bb" x="1353" y="309"/><use href="#bb" x="1416" y="309"/><use href="#bb" x="1487" y="309"/><use href="#bb" x="1560" y="309"/>
            <use href="#bb" x="516" y="886"/><use href="#bb" x="588" y="886"/><use href="#bb" x="681" y="886"/><use href="#bb" x="715" y="886"/><use href="#bb" x="749" y="886"/><use href="#bb" x="787" y="886"/><use href="#bb" x="832" y="886"/><use href="#bb" x="872" y="886"/><use href="#bb" x="965" y="886"/><use href="#bb" x="1037" y="886"/><use href="#bb" x="1111" y="886"/><use href="#bb" x="1203" y="886"/><use href="#bb" x="1243" y="886"/><use href="#bb" x="1287" y="886"/><use href="#bb" x="1327" y="886"/><use href="#bb" x="1361" y="886"/><use href="#bb" x="1393" y="886"/><use href="#bb" x="1487" y="886"/><use href="#bb" x="1560" y="886"/>
            <use href="#bb" x="400" y="425"/><use href="#bb" x="400" y="458"/><use href="#bb" x="400" y="512"/><use href="#bb" x="400" y="531"/><use href="#bb" x="400" y="564"/><use href="#bb" x="400" y="657"/><use href="#bb" x="400" y="723"/><use href="#bb" x="400" y="771"/>
            <use href="#bb" x="1444" y="292"/><use href="#bb" x="1444" y="358"/><use href="#bb" x="1444" y="425"/><use href="#bb" x="1560" y="540"/><use href="#bb" x="1631" y="540"/>
          </g>
          <g class="num">
            <text x="516" y="316">1</text><text x="588" y="316">2</text><text x="660" y="316">3</text><text x="721" y="316">6</text><text x="778" y="316">8</text><text x="832" y="316" textLength="19" lengthAdjust="spacingAndGlyphs">10</text><text x="893" y="316" textLength="19" lengthAdjust="spacingAndGlyphs">12</text><text x="965" y="316" textLength="19" lengthAdjust="spacingAndGlyphs">13</text><text x="1037" y="316" textLength="19" lengthAdjust="spacingAndGlyphs">14</text><text x="1111" y="316" textLength="19" lengthAdjust="spacingAndGlyphs">15</text><text x="1181" y="316" textLength="19" lengthAdjust="spacingAndGlyphs">16</text><text x="1243" y="316" textLength="19" lengthAdjust="spacingAndGlyphs">18</text><text x="1296" y="316" textLength="19" lengthAdjust="spacingAndGlyphs">20</text><text x="1353" y="316" textLength="19" lengthAdjust="spacingAndGlyphs">22</text><text x="1416" y="316" textLength="19" lengthAdjust="spacingAndGlyphs">25</text><text x="1487" y="316" textLength="19" lengthAdjust="spacingAndGlyphs">26</text><text x="1560" y="316" textLength="19" lengthAdjust="spacingAndGlyphs">27</text>
            <text x="516" y="893">1</text><text x="588" y="893">2</text><text x="681" y="893">4</text><text x="715" y="893">5</text><text x="749" y="893">7</text><text x="787" y="893">9</text><text x="832" y="893" textLength="19" lengthAdjust="spacingAndGlyphs">10</text><text x="872" y="893" textLength="19" lengthAdjust="spacingAndGlyphs">11</text><text x="965" y="893" textLength="19" lengthAdjust="spacingAndGlyphs">13</text><text x="1037" y="893" textLength="19" lengthAdjust="spacingAndGlyphs">14</text><text x="1111" y="893" textLength="19" lengthAdjust="spacingAndGlyphs">15</text><text x="1203" y="893" textLength="19" lengthAdjust="spacingAndGlyphs">17</text><text x="1243" y="893" textLength="19" lengthAdjust="spacingAndGlyphs">18</text><text x="1287" y="893" textLength="19" lengthAdjust="spacingAndGlyphs">19</text><text x="1327" y="893" textLength="19" lengthAdjust="spacingAndGlyphs">21</text><text x="1361" y="893" textLength="19" lengthAdjust="spacingAndGlyphs">23</text><text x="1393" y="893" textLength="19" lengthAdjust="spacingAndGlyphs">24</text><text x="1487" y="893" textLength="19" lengthAdjust="spacingAndGlyphs">26</text><text x="1560" y="893" textLength="19" lengthAdjust="spacingAndGlyphs">27</text>
            <text x="400" y="432">H</text><text x="400" y="465">G</text><text x="400" y="519">F</text><text x="400" y="538">E</text><text x="400" y="571">D</text><text x="400" y="664">C</text><text x="400" y="730">B</text><text x="400" y="778">A</text>
            <text x="1444" y="299">C</text><text x="1444" y="365">B</text><text x="1444" y="432">A</text><text x="1560" y="547">1</text>
          </g>
          <g class="dm">
            <text x="1039" y="355" textLength="53" lengthAdjust="spacingAndGlyphs">47200</text>
            <text x="1039" y="855" textLength="53" lengthAdjust="spacingAndGlyphs">47200</text>
            <text x="553" y="388" textLength="42" lengthAdjust="spacingAndGlyphs">3300</text><text x="626" y="388" textLength="42" lengthAdjust="spacingAndGlyphs">3200</text><text x="691" y="388" textLength="42" lengthAdjust="spacingAndGlyphs">2800</text><text x="751" y="388" textLength="42" lengthAdjust="spacingAndGlyphs">2600</text><text x="807" y="388" textLength="42" lengthAdjust="spacingAndGlyphs">2400</text><text x="864" y="388" textLength="42" lengthAdjust="spacingAndGlyphs">2800</text><text x="930" y="388" textLength="42" lengthAdjust="spacingAndGlyphs">3200</text><text x="1002" y="388" textLength="42" lengthAdjust="spacingAndGlyphs">3300</text><text x="1076" y="388" textLength="42" lengthAdjust="spacingAndGlyphs">3300</text><text x="1147" y="388" textLength="42" lengthAdjust="spacingAndGlyphs">3200</text><text x="1214" y="388" textLength="42" lengthAdjust="spacingAndGlyphs">2800</text><text x="1271" y="388" textLength="42" lengthAdjust="spacingAndGlyphs">2400</text><text x="1327" y="388" textLength="42" lengthAdjust="spacingAndGlyphs">2600</text><text x="1386" y="388" textLength="42" lengthAdjust="spacingAndGlyphs">2800</text><text x="1452" y="388" textLength="42" lengthAdjust="spacingAndGlyphs">3200</text><text x="1524" y="388" textLength="42" lengthAdjust="spacingAndGlyphs">3300</text>
            <text x="553" y="821" textLength="42" lengthAdjust="spacingAndGlyphs">3300</text><text x="636" y="821" textLength="42" lengthAdjust="spacingAndGlyphs">4200</text><text x="699" y="821" textLength="42" lengthAdjust="spacingAndGlyphs">1500</text><text x="737" y="821" textLength="42" lengthAdjust="spacingAndGlyphs">1500</text><text x="774" y="821" textLength="42" lengthAdjust="spacingAndGlyphs">1800</text><text x="811" y="821" textLength="42" lengthAdjust="spacingAndGlyphs">2000</text><text x="853" y="821" textLength="42" lengthAdjust="spacingAndGlyphs">1800</text><text x="919" y="821" textLength="42" lengthAdjust="spacingAndGlyphs">4200</text><text x="1002" y="821" textLength="42" lengthAdjust="spacingAndGlyphs">3300</text><text x="1076" y="821" textLength="42" lengthAdjust="spacingAndGlyphs">3300</text><text x="1158" y="821" textLength="42" lengthAdjust="spacingAndGlyphs">4200</text><text x="1224" y="821" textLength="42" lengthAdjust="spacingAndGlyphs">1800</text><text x="1266" y="821" textLength="42" lengthAdjust="spacingAndGlyphs">2000</text><text x="1309" y="821" textLength="42" lengthAdjust="spacingAndGlyphs">1800</text><text x="1350" y="821" textLength="42" lengthAdjust="spacingAndGlyphs">1500</text><text x="1383" y="821" textLength="42" lengthAdjust="spacingAndGlyphs">1500</text><text x="1441" y="821" textLength="42" lengthAdjust="spacingAndGlyphs">4200</text><text x="1525" y="821" textLength="42" lengthAdjust="spacingAndGlyphs">3300</text>
            <text x="1596" y="455" textLength="42" lengthAdjust="spacingAndGlyphs">3200</text>
            <text transform="rotate(-90 480 440)" x="480" y="440" textLength="42" lengthAdjust="spacingAndGlyphs">1500</text><text transform="rotate(-90 480 483)" x="480" y="483" textLength="42" lengthAdjust="spacingAndGlyphs">2400</text><text transform="rotate(-90 480 521)" x="480" y="521" textLength="32" lengthAdjust="spacingAndGlyphs">900</text><text transform="rotate(-90 480 547)" x="480" y="547" textLength="42" lengthAdjust="spacingAndGlyphs">1500</text><text transform="rotate(-90 480 610)" x="480" y="610" textLength="42" lengthAdjust="spacingAndGlyphs">4200</text><text transform="rotate(-90 480 690)" x="480" y="690" textLength="42" lengthAdjust="spacingAndGlyphs">3000</text><text transform="rotate(-90 480 746)" x="480" y="746" textLength="42" lengthAdjust="spacingAndGlyphs">2100</text>
            <text transform="rotate(-90 445 594)" x="445" y="594" textLength="53" lengthAdjust="spacingAndGlyphs">15600</text>
            <text transform="rotate(-90 1612 440)" x="1612" y="440" textLength="42" lengthAdjust="spacingAndGlyphs">1500</text><text transform="rotate(-90 1612 483)" x="1612" y="483" textLength="42" lengthAdjust="spacingAndGlyphs">2400</text><text transform="rotate(-90 1612 521)" x="1612" y="521" textLength="32" lengthAdjust="spacingAndGlyphs">900</text><text transform="rotate(-90 1612 547)" x="1612" y="547" textLength="42" lengthAdjust="spacingAndGlyphs">1500</text><text transform="rotate(-90 1612 610)" x="1612" y="610" textLength="42" lengthAdjust="spacingAndGlyphs">4200</text><text transform="rotate(-90 1612 690)" x="1612" y="690" textLength="42" lengthAdjust="spacingAndGlyphs">3000</text><text transform="rotate(-90 1612 746)" x="1612" y="746" textLength="42" lengthAdjust="spacingAndGlyphs">2100</text>
            <text transform="rotate(-90 1512 357)" x="1512" y="357" textLength="42" lengthAdjust="spacingAndGlyphs">6000</text><text transform="rotate(-90 1545 323)" x="1545" y="323" textLength="42" lengthAdjust="spacingAndGlyphs">3000</text><text transform="rotate(-90 1545 390)" x="1545" y="390" textLength="42" lengthAdjust="spacingAndGlyphs">3000</text>
          </g>
          <!-- coordinate triad -->
          <path d="M391.500 882V836" stroke="#00f040" stroke-width="4"/><path d="M391.500 820l5 17h-10z" fill="#00f040"/>
          <path d="M391 882H438" stroke="#f01010" stroke-width="5"/><path d="M453 882l-16 5v-10z" fill="#f01010"/>
          <text class="ax-y" x="402" y="837">Y</text><text class="ax-x" x="437" y="870">X</text>
        </svg>
      </div>
    </div>
  </div>

  <div class="dropdown-menu show floormenu">
    <a class="dropdown-item d-flex align-items-center"><svg><use href="#m1"/></svg>切换楼层(H)...</a>
    <a class="dropdown-item d-flex align-items-center"><svg><use href="#m2"/></svg><span>下一楼层(B)</span><span>Ctrl+-</span></a>
    <a class="dropdown-item d-flex align-items-center"><svg><use href="#m3"/></svg><span>上一楼层(A)</span><span>Ctrl+=</span></a>
    <hr class="dropdown-divider">
    <a class="dropdown-item d-flex align-items-center"><svg><use href="#m4"/></svg>删除当前楼层构件图元(F)</a>
    <a class="dropdown-item picked d-flex align-items-center"><svg><use href="#m5"/></svg>从其它楼层复制构件图元(O)...</a>
    <a class="dropdown-item d-flex align-items-center"><svg><use href="#m6"/></svg>复制选定图元到其它楼层(F)...</a>
    <a class="dropdown-item d-flex align-items-center"><svg><use href="#m7"/></svg>修改楼层构件名称(G)...</a>
    <hr class="dropdown-divider">
    <a class="dropdown-item d-flex align-items-center"><svg><use href="#m8"/></svg>块复制(Y)</a>
    <a class="dropdown-item d-flex align-items-center"><svg><use href="#m9"/></svg>块移动(V)</a>
    <a class="dropdown-item d-flex align-items-center"><svg><use href="#m10"/></svg>块旋转(R)</a>
    <a class="dropdown-item d-flex align-items-center"><svg><use href="#m11"/></svg>块镜像(M)</a>
    <a class="dropdown-item d-flex align-items-center"><svg><use href="#m12"/></svg>块拉伸(X)</a>
    <a class="dropdown-item d-flex align-items-center"><svg><use href="#m13"/></svg>块删除(D)</a>
    <a class="dropdown-item d-flex align-items-center"><svg><use href="#m14"/></svg>块存盘(S)</a>
    <a class="dropdown-item d-flex align-items-center"><svg><use href="#m15"/></svg>块提取(L)</a>
    <a class="dropdown-item d-flex align-items-center"><svg><use href="#m16"/></svg>自动拆分标准层</a>
    <hr class="dropdown-divider">
    <a class="dropdown-item d-flex align-items-center"><svg><use href="#m17"/></svg>图元提取(U)</a>
  </div>

  <div class="redbox rb-a"></div>
  <div class="redbox rb-b"></div>
  <svg class="anno" width="1627" height="925" xmlns="http://www.w3.org/2000/svg"><polygon points="125,52 128,52 140,129 149,127 141,151 127,136 135,130" fill="#e81ee8"/></svg>
</div>
<script src="https://cdn.jsdelivr.net/npm/bootstrap@5.3.0/dist/js/bootstrap.bundle.min.js"></script>
</body>
</html>
